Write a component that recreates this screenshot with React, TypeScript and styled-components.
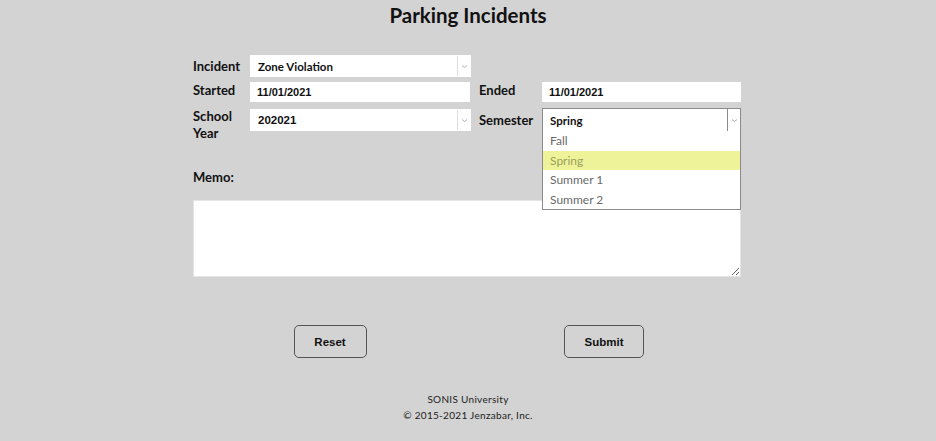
import React from 'react';
import styled, { createGlobalStyle } from 'styled-components';

const GlobalStyle = createGlobalStyle`
  html, body {
    margin: 0;
    padding: 0;
    background-color: #d3d3d3;
  }
  body {
    font-family: Lato, "Open Sans", sans-serif;
    color: #111;
  }
`;

const Page = styled.div`
  display: flex;
  flex-direction: column;
  align-items: center;
  min-height: 441px;
`;

const Title = styled.h1`
  margin: 0;
  padding-top: 2px;
  font-size: 20.5px;
  line-height: 26px;
  font-weight: 700;
  color: #111;
`;

const Form = styled.form`
  width: 548px;
  margin-top: 27px;
  margin-right: 2px;
  display: flex;
  flex-direction: column;
`;

const Grid = styled.div`
  display: grid;
  grid-template-columns: 57px 229px 63px 199px;
  grid-template-rows: 22px 21px 24px;
  row-gap: 5px;
`;

const Label = styled.label<{ $col: number; $row: number; $center?: boolean }>`
  grid-column: ${p => p.$col};
  grid-row: ${p => p.$row};
  align-self: ${p => (p.$center ? 'center' : 'start')};
  font-size: 13px;
  font-weight: 700;
  line-height: 17px;
  color: #111;
  white-space: pre-line;
`;

const Cell = styled.div<{ $col: number; $row: number; $width: number }>`
  grid-column: ${p => p.$col};
  grid-row: ${p => p.$row};
  width: ${p => p.$width}px;
  position: relative;
`;

const SelectBox = styled.div<{ $open?: boolean; $height: number; $top?: number }>`
  height: ${p => p.$height}px;
  margin-top: ${p => p.$top ?? 0}px;
  box-sizing: border-box;
  background: #fff;
  border: 1px solid ${p => (p.$open ? '#8a8a8a' : '#fff')};
  display: flex;
  align-items: stretch;
`;

const SelectValue = styled.span<{ $mono?: boolean }>`
  flex: 1;
  display: flex;
  align-items: center;
  padding-left: 7px;
  font-family: ${p => (p.$mono ? '"Liberation Sans", Arial, sans-serif' : 'Lato, sans-serif')};
  font-size: 11.5px;
  font-weight: 700;
  color: #111;
`;

const Arrow = styled.span<{ $open?: boolean }>`
  width: 12px;
  display: flex;
  align-items: center;
  justify-content: center;
  border-left: 1px solid ${p => (p.$open ? '#8a8a8a' : '#dedede')};
`;

const TextInput = styled.div`
  height: 20px;
  box-sizing: border-box;
  background: #fff;
  display: flex;
  align-items: center;
  padding-left: 7px;
  font-family: "Liberation Sans", Arial, sans-serif;
  font-size: 11px;
  font-weight: 700;
  color: #111;
`;

const DropList = styled.ul`
  position: absolute;
  left: 0;
  right: 0;
  top: 23px;
  margin: 0;
  padding: 0;
  list-style: none;
  background: #fff;
  border: 1px solid #8a8a8a;
  border-top: none;
  z-index: 2;
`;

const DropItem = styled.li<{ $active?: boolean }>`
  height: 19.5px;
  line-height: 19.5px;
  padding-left: 7px;
  font-size: 12px;
  font-weight: 400;
  color: ${p => (p.$active ? '#9a9f5c' : '#6a6a6a')};
  background: ${p => (p.$active ? '#eef39a' : 'transparent')};
`;

const MemoLabel = styled.label`
  margin-top: 37px;
  font-size: 13px;
  font-weight: 700;
  line-height: 17px;
`;

const Memo = styled.textarea`
  margin-top: 14px;
  width: 548px;
  height: 77px;
  box-sizing: border-box;
  border: 1px solid #e4e4e4;
  background: #fff;
  resize: both;
  outline: none;
  display: block;
`;

const Buttons = styled.div`
  margin-top: 48px;
  display: grid;
  grid-template-columns: 1fr 1fr;
  justify-items: center;
`;

const Button = styled.button<{ $width: number }>`
  width: ${p => p.$width}px;
  height: 33px;
  background: transparent;
  border: 1px solid #555;
  border-radius: 5px;
  font-family: "Liberation Sans", Arial, sans-serif;
  font-size: 11.5px;
  font-weight: 700;
  color: #111;
  padding: 0;
`;

const Footer = styled.footer`
  margin-top: 33px;
  display: flex;
  flex-direction: column;
  align-items: center;
  font-size: 10px;
  line-height: 16px;
  letter-spacing: 0.3px;
  color: #222;
`;

const Chevron = () => (
  <svg width="7" height="5" viewBox="0 0 7 5" fill="none">
    <path d="M1 1.5 L3.5 3.5 L6 1.5" stroke="#b0b0b0" strokeWidth="1" />
  </svg>
);

const semesters = ['Fall', 'Spring', 'Summer 1', 'Summer 2'];

export default function App() {
  return (
    <Page>
      <GlobalStyle />
      <Title>Parking Incidents</Title>
      <Form onSubmit={e => e.preventDefault()}>
        <Grid>
          <Label $col={1} $row={1} $center>Incident</Label>
          <Cell $col={2} $row={1} $width={221}>
            <SelectBox $height={22}>
              <SelectValue>Zone Violation</SelectValue>
              <Arrow><Chevron /></Arrow>
            </SelectBox>
          </Cell>

          <Label $col={1} $row={2}>Started</Label>
          <Cell $col={2} $row={2} $width={220}>
            <TextInput>11/01/2021</TextInput>
          </Cell>
          <Label $col={3} $row={2}>Ended</Label>
          <Cell $col={4} $row={2} $width={199}>
            <TextInput>11/01/2021</TextInput>
          </Cell>

          <Label $col={1} $row={3}>{'School\nYear'}</Label>
          <Cell $col={2} $row={3} $width={221}>
            <SelectBox $height={22} $top={1}>
              <SelectValue $mono>202021</SelectValue>
              <Arrow><Chevron /></Arrow>
            </SelectBox>
          </Cell>
          <Label $col={3} $row={3} $center>Semester</Label>
          <Cell $col={4} $row={3} $width={199}>
            <SelectBox $height={24} $open>
              <SelectValue>Spring</SelectValue>
              <Arrow $open><Chevron /></Arrow>
            </SelectBox>
            <DropList>
              {semesters.map(s => (
                <DropItem key={s} $active={s === 'Spring'}>{s}</DropItem>
              ))}
            </DropList>
          </Cell>
        </Grid>

        <MemoLabel>Memo:</MemoLabel>
        <Memo />

        <Buttons>
          <Button type="reset" $width={73}>Reset</Button>
          <Button type="submit" $width={80}>Submit</Button>
        </Buttons>
      </Form>
      <Footer>
        <span>SONIS University</span>
        <span>© 2015-2021 Jenzabar, Inc.</span>
      </Footer>
    </Page>
  );
}
